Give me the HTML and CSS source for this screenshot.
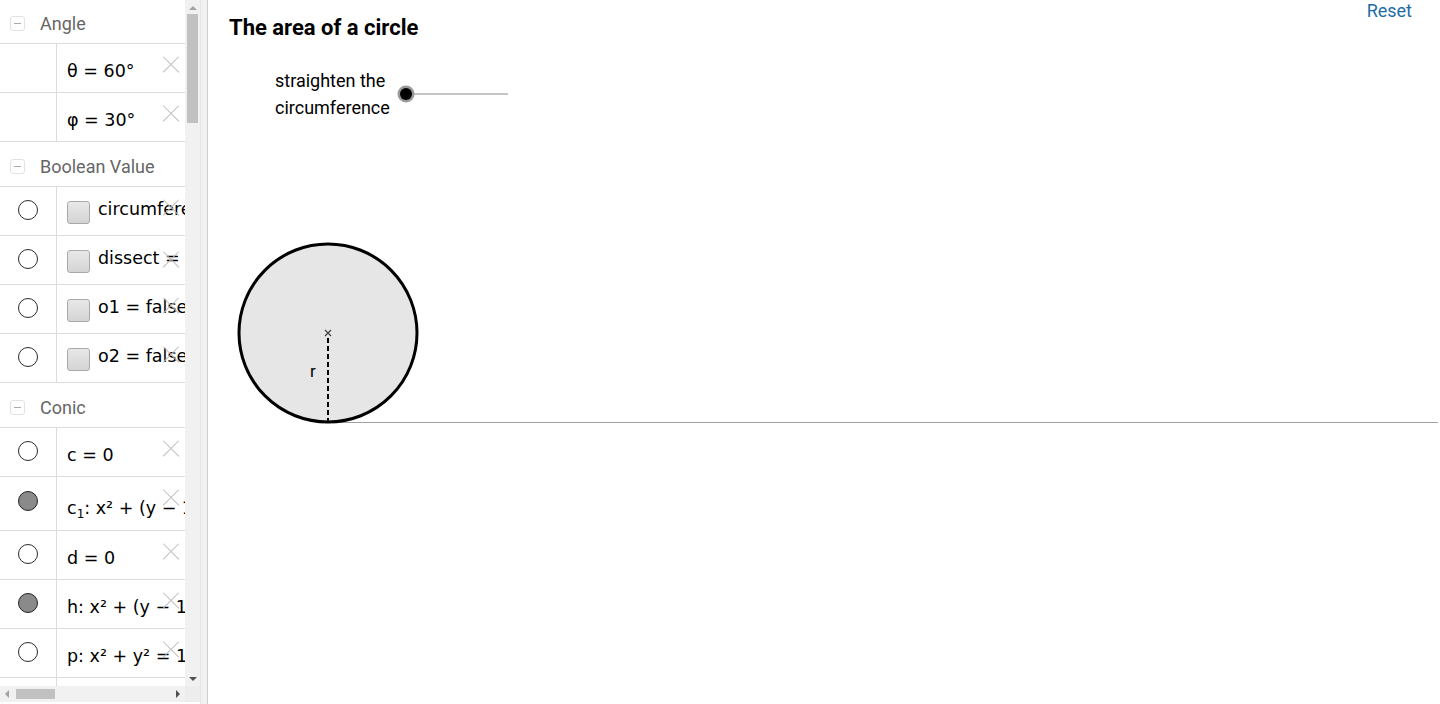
FILE: index.html
```html
<!DOCTYPE html>
<html>
<head>
<meta charset="utf-8">
<link rel="stylesheet" href="styles.css">
</head>
<body>
<div class="app">
  <aside class="algebra">
    <div class="algebra-main">
      <div class="list">
        <div class="list-inner">
          <div class="group-head"><span class="collapse"></span><span class="group-title">Angle</span></div>
          <div class="item"><div class="marble"></div><div class="item-body"><span class="math">θ = 60°</span></div><span class="del"></span></div>
          <div class="item"><div class="marble"></div><div class="item-body"><span class="math">φ = 30°</span></div><span class="del"></span></div>

          <div class="group-head"><span class="collapse"></span><span class="group-title">Boolean Value</span></div>
          <div class="item"><div class="marble"><span class="radio"></span></div><div class="item-body bool"><span class="check"></span><span class="math">circumference = true</span></div><span class="del"></span></div>
          <div class="item"><div class="marble"><span class="radio"></span></div><div class="item-body bool"><span class="check"></span><span class="math">dissect = true</span></div><span class="del del-low"></span></div>
          <div class="item"><div class="marble"><span class="radio"></span></div><div class="item-body bool"><span class="check"></span><span class="math">o1 = false</span></div><span class="del"></span></div>
          <div class="item"><div class="marble"><span class="radio"></span></div><div class="item-body bool"><span class="check"></span><span class="math">o2 = false</span></div><span class="del"></span></div>

          <div class="group-head"><span class="collapse"></span><span class="group-title">Conic</span></div>
          <div class="item"><div class="marble"><span class="radio"></span></div><div class="item-body"><span class="math">c = 0</span></div><span class="del"></span></div>
          <div class="item tall"><div class="marble"><span class="radio on"></span></div><div class="item-body"><span class="math">c<sub>1</sub>: x² + (y − 1)² = 1</span></div><span class="del"></span></div>
          <div class="item"><div class="marble"><span class="radio"></span></div><div class="item-body"><span class="math">d = 0</span></div><span class="del"></span></div>
          <div class="item"><div class="marble"><span class="radio on"></span></div><div class="item-body"><span class="math">h: x² + (y − 1)² = 1</span></div><span class="del"></span></div>
          <div class="item"><div class="marble"><span class="radio"></span></div><div class="item-body"><span class="math">p: x² + y² = 1</span></div><span class="del"></span></div>
          <div class="item"><div class="marble"></div><div class="item-body"></div></div>
        </div>
      </div>
      <div class="vscroll">
        <span class="arrow up"></span>
        <div class="vthumb"></div>
        <div class="vspace"></div>
        <span class="arrow down"></span>
      </div>
    </div>
    <div class="hbar">
      <div class="hscroll">
        <span class="arrow left"></span>
        <div class="hthumb"></div>
        <div class="hspace"></div>
        <span class="arrow right"></span>
      </div>
      <div class="corner"></div>
    </div>
  </aside>
  <div class="splitter"></div>
  <main class="canvas">
    <div class="title">The area of a circle</div>
    <a class="reset">Reset</a>
    <div class="slider-label">straighten the<br>circumference</div>
    <svg class="drawing" width="1232" height="704" viewBox="0 0 1232 704">
      <line x1="198" y1="94" x2="300" y2="94" stroke="#8a8a8a" stroke-width="1"/>
      <circle cx="198" cy="94" r="8.5" fill="#999"/>
      <circle cx="198" cy="94" r="6" fill="#000"/>
      <line x1="120" y1="422.5" x2="1230" y2="422.5" stroke="#a0a0a0" stroke-width="1"/>
      <circle cx="120" cy="333" r="89" fill="#e6e6e6" stroke="#000" stroke-width="3"/>
      <line x1="120" y1="338" x2="120" y2="422" stroke="#000" stroke-width="2" stroke-dasharray="5 3"/>
      <path d="M117 330 L123 336 M123 330 L117 336" stroke="#444" stroke-width="1.3"/>
      <text x="102" y="377" class="rlabel">r</text>
    </svg>
  </main>
</div>
</body>
</html>
```

FILE: styles.css
```css
* { box-sizing: border-box; }
html, body { margin: 0; padding: 0; }
body {
  width: 1440px;
  height: 704px;
  overflow: hidden;
  background: #fff;
  font-family: Roboto, "Liberation Sans", sans-serif;
}
.app {
  display: flex;
  height: 704px;
}
.algebra {
  width: 200px;
  flex: none;
  display: flex;
  flex-direction: column;
  height: 704px;
}
.algebra-main {
  display: flex;
  height: 686px;
}
.list {
  width: 185px;
  height: 686px;
  overflow: hidden;
  background: #fff;
}
.list-inner {
  margin-top: -1px;
}
.group-head {
  height: 45px;
  border-bottom: 1px solid #dcdcdc;
  display: flex;
  align-items: center;
  padding-top: 5px;
}
.collapse {
  width: 15px;
  height: 15px;
  margin-left: 10px;
  margin-top: -1px;
  border: 1px solid #e2e2e2;
  border-radius: 3px;
  position: relative;
  background: #fff;
}
.collapse::after {
  content: "";
  position: absolute;
  left: 3px;
  right: 3px;
  top: 6px;
  height: 1px;
  background: #aaa;
}
.group-title {
  margin-left: 15px;
  font-size: 18px;
  color: #666;
}
.item {
  height: 49px;
  border-bottom: 1px solid #dcdcdc;
  display: flex;
  position: relative;
}
.item.tall { height: 54px; }
.marble {
  width: 57px;
  flex: none;
  border-right: 1px solid #dcdcdc;
  display: flex;
  justify-content: center;
  align-items: flex-start;
}
.radio {
  width: 20px;
  height: 20px;
  border-radius: 50%;
  border: 1px solid #2a2a2a;
  background: #fff;
  margin-top: 13px;
}
.radio.on { background: #8a8a8a; border-color: #222; }
.item.tall .radio { margin-top: 14px; }
.item-body {
  flex: 1;
  display: flex;
  align-items: center;
  padding-left: 10px;
  padding-top: 6px;
  white-space: nowrap;
  overflow: hidden;
}
.item-body.bool {
  padding-top: 0;
  align-items: center;
}
.item.tall .item-body { padding-top: 8px; }
.math {
  font-family: "DejaVu Sans", "Liberation Sans", sans-serif;
  font-size: 17.5px;
  color: #000;
  white-space: nowrap;
}
.math sub { font-size: 12px; vertical-align: -4px; line-height: 0; }
.bool .math { margin-top: -5px; }
.check {
  width: 23px;
  height: 23px;
  flex: none;
  border: 1px solid #a9a9a9;
  border-radius: 3px;
  background: linear-gradient(#e8e8e8, #d4d4d4);
  margin-right: 8px;
  margin-top: 2px;
}
.del {
  position: absolute;
  left: 163px;
  top: 13px;
  width: 16px;
  height: 16px;
}
.del::before, .del::after {
  content: "";
  position: absolute;
  left: -3px;
  top: 7px;
  width: 22px;
  height: 1.3px;
  background: #bdbdbd;
  transform: rotate(45deg);
}
.del::after { transform: rotate(-45deg); }
.del-low { top: 16px; }

.vscroll {
  width: 15px;
  height: 686px;
  background: #f1f1f1;
  display: flex;
  flex-direction: column;
  align-items: center;
}
.vthumb {
  width: 11px;
  height: 109px;
  background: #c1c1c1;
  margin-top: 4px;
}
.vspace { flex: 1; }
.arrow {
  width: 0;
  height: 0;
  border: 4px solid transparent;
  flex: none;
}
.arrow.up { border-bottom-color: #a3a3a3; border-top-width: 0; margin-top: 6px; }
.arrow.down { border-top-color: #505050; border-bottom-width: 0; margin-bottom: 5px; }
.hbar {
  display: flex;
  height: 18px;
}
.hscroll {
  width: 185px;
  height: 16px;
  background: #f1f1f1;
  display: flex;
  align-items: center;
}
.hthumb {
  width: 39px;
  height: 10px;
  background: #c1c1c1;
  margin-left: 7px;
}
.hspace { flex: 1; }
.arrow.left { border-right-color: #a3a3a3; border-left-width: 0; margin-left: 5px; }
.arrow.right { border-left-color: #505050; border-right-width: 0; margin-right: 5px; }
.corner {
  width: 15px;
  height: 16px;
  background: #ededed;
}
.splitter {
  width: 8px;
  flex: none;
  border-left: 1px solid #e4e4e4;
  border-right: 1px solid #cfcfcf;
  background: #f2f2f2;
}
.canvas {
  position: relative;
  flex: 1;
  height: 704px;
  background: #fff;
}
.drawing {
  position: absolute;
  left: 0;
  top: 0;
}
.title {
  position: absolute;
  left: 21px;
  top: 15px;
  font-family: Roboto, sans-serif;
  font-weight: bold;
  font-size: 22px;
  color: #000;
}
.reset {
  position: absolute;
  right: 28px;
  top: 0;
  font-family: Roboto, sans-serif;
  font-size: 18px;
  color: #1f6ea3;
}
.slider-label {
  position: absolute;
  left: 67px;
  top: 67px;
  font-family: Roboto, sans-serif;
  font-size: 18px;
  line-height: 27px;
  color: #000;
  z-index: 1;
}
.rlabel {
  font-family: Roboto, sans-serif;
  font-size: 17px;
  fill: #000;
}
```
